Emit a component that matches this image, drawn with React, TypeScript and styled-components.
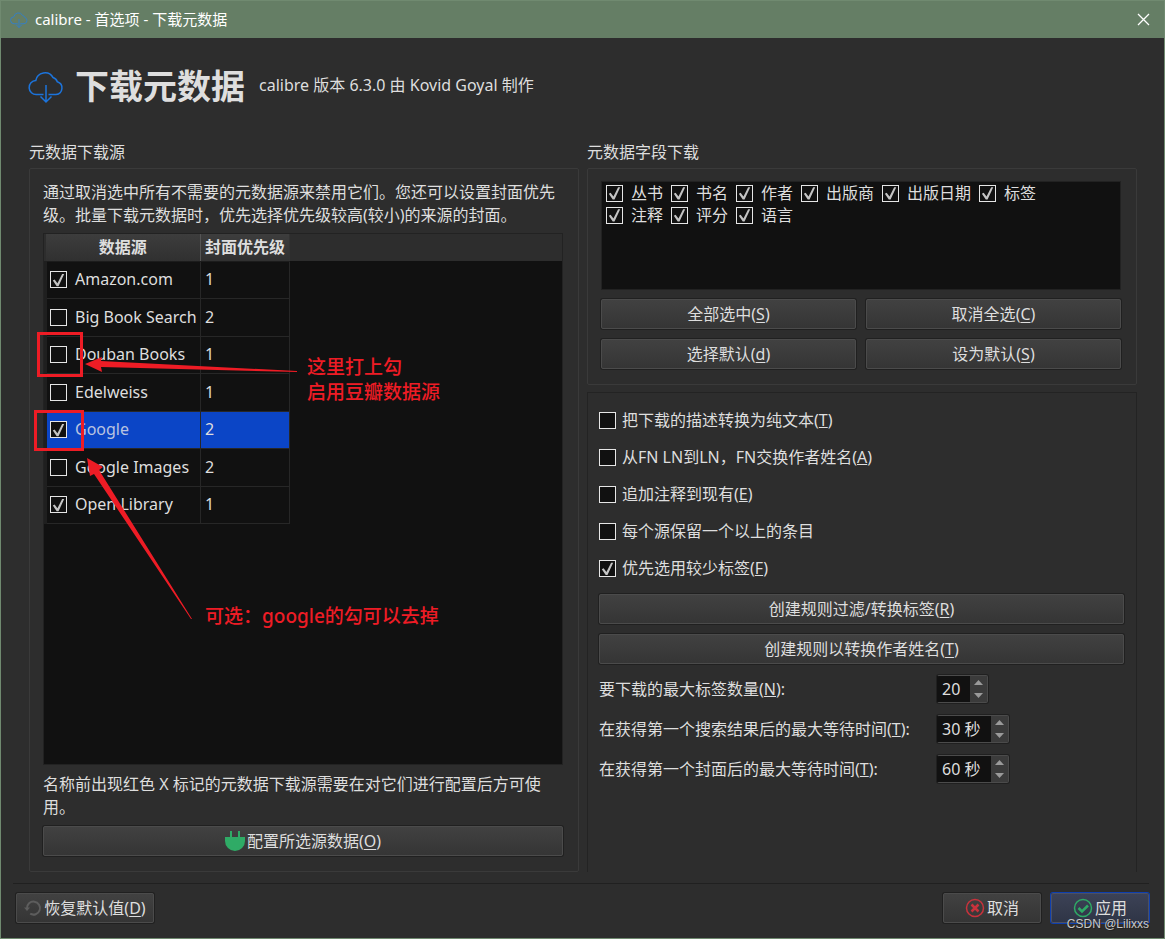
import React, { useId, useState } from 'react';
import styled, { createGlobalStyle } from 'styled-components';

const GlobalStyle = createGlobalStyle`
  *, *::before, *::after { box-sizing: border-box; }
  body { margin: 0; background: #2d2d2d; }
  body, button, input, table {
    font-family: 'Noto Sans', 'Noto Sans CJK SC', sans-serif;
    font-size: 16px;
    line-height: 23px;
    color: #dedede;
  }
  h1, h2, p { margin: 0; }
`;

const Window = styled.div`
  position: relative;
  display: flex;
  flex-direction: column;
  min-height: 100vh;
  background: #2d2d2d;
  border: 1px solid #708a70;
  border-top: 0;
`;

const TitleBar = styled.header`
  display: flex;
  align-items: center;
  gap: 7px;
  height: 38px;
  padding: 0 14px 0 9px;
  background: #657e65;
  border-top: 1px solid #708a70;
  color: #fff;
  font-size: 15px;
`;

const TitleText = styled.span`
  flex: 1;
`;

const CloseButton = styled.button`
  display: flex;
  padding: 0;
  border: 0;
  background: none;
`;

const PageHeader = styled.div`
  display: flex;
  align-items: flex-start;
  height: 98px;
  padding: 23px 27px 0;
`;

const CloudSlot = styled.div`
  display: flex;
  padding-top: 8px;
  margin-right: 11px;
`;

const PageTitle = styled.h1`
  font-size: 34px;
  line-height: 50px;
  font-weight: 700;
  margin-right: 14px;
`;

const Version = styled.span`
  line-height: 48px;
`;

const Columns = styled.main`
  flex: 1;
  display: grid;
  grid-template-columns: 1fr 1fr;
  column-gap: 8px;
  padding: 0 27px 0 28px;
`;

const Column = styled.section`
  display: flex;
  flex-direction: column;
  min-width: 0;
`;

const GroupTitle = styled.h2`
  font-size: 16px;
  line-height: 32px;
  font-weight: 400;
`;

const Panel = styled.div<{ $grow?: boolean }>`
  display: flex;
  flex-direction: column;
  flex: ${(p) => (p.$grow ? 1 : 'none')};
  padding: 12px 15px 15px 13px;
  border: 1px solid #3a3a3a;
  border-radius: 2px;
`;

const OptionsPanel = styled.div`
  display: flex;
  flex-direction: column;
  flex: 1;
  margin-top: 7px;
  padding: 9px 12px 16px 11px;
  border: 1px solid #232323;
  border-bottom: 0;
`;

const Frame = styled.div`
  flex: 1;
  margin: 6px 0 8px;
  background: linear-gradient(#2d2d2d 27px, #111 27px);
  border: 1px solid #222;
`;

const SourceTable = styled.table`
  height: 290px;
  width: 246px;
  border-collapse: collapse;
`;

const HeadCell = styled.th`
  height: 27px;
  padding: 0;
  background: linear-gradient(#3d3d3d, #303030);
  border-right: 1px solid #555;
  border-bottom: 1px solid #1c1c1c;
  font-weight: 700;
  line-height: 22px;
  white-space: nowrap;
  &:last-child { border-right-color: #333; }
`;

const Cell = styled.td<{ $selected?: boolean }>`
  padding: 0 0 0 4px;
  border: 1px solid #272727;
  background: ${(p) => (p.$selected ? '#0b45c6' : '#111')};
  &:first-child {
    width: 155px;
    padding-left: 3px;
    border-left: 3px solid #1f1f1f;
    color: ${(p) => (p.$selected ? '#b9c3e0' : 'inherit')};
  }
`;

const CheckLabel = styled.label<{ $tall?: boolean }>`
  display: flex;
  align-items: center;
  gap: ${(p) => (p.$tall ? '6px' : '8px')};
  height: ${(p) => (p.$tall ? '37px' : 'auto')};
  white-space: nowrap;
`;

const CheckBox = styled.input`
  appearance: none;
  flex: none;
  width: 17px;
  height: 17px;
  margin: 0;
  border: 1px solid #e6e6e6;
  background: #111;
  &:checked::before {
    content: '';
    display: block;
    width: 15px;
    height: 15px;
    background: #c4c4c4;
    clip-path: polygon(12% 55%, 24% 49%, 43% 74%, 74% 12%, 88% 12%, 50% 94%, 38% 94%);
  }
`;

const FieldList = styled.div`
  display: flex;
  flex-wrap: wrap;
  align-content: flex-start;
  column-gap: 8px;
  height: 109px;
  padding: 0 24px 0 4px;
  background: #111;
  border: 1px solid #222;
  line-height: 22px;
`;

const ButtonGrid = styled.div`
  display: grid;
  grid-template-columns: 1fr 1fr;
  gap: 10px;
  margin-top: 9px;
`;

const ButtonStack = styled.div`
  display: grid;
  gap: 10px;
  margin-top: 7px;
`;

const PushButton = styled.button<{ $primary?: boolean; $width?: string }>`
  display: flex;
  align-items: center;
  justify-content: center;
  gap: 2px;
  height: 30px;
  width: ${(p) => p.$width ?? 'auto'};
  padding: 0 6px;
  border: 1px solid ${(p) => (p.$primary ? '#4a5064' : '#4b4b4b')};
  border-radius: 2px;
  background: ${(p) => (p.$primary ? 'linear-gradient(#3c4256, #2f3546)' : 'linear-gradient(#414141, #353535)')};
  box-shadow: 0 0 0 1px ${(p) => (p.$primary ? '#0f3fae' : '#202020')};
  u { text-underline-offset: 2px; }
`;

const SpinGrid = styled.div`
  display: grid;
  grid-template-columns: 338px auto;
  justify-content: start;
  align-items: center;
  grid-auto-rows: 40px;
  margin-top: 5px;
`;

const SpinBox = styled.div`
  display: flex;
  width: fit-content;
  height: 28px;
  border: 1px solid #4b4b4b;
  border-left-color: #111;
  border-radius: 2px;
  background: #111;
  box-shadow: 0 0 0 1px #202020;
`;

const SpinInput = styled.input<{ $wide?: boolean }>`
  width: ${(p) => (p.$wide ? '53px' : '32px')};
  padding: 0 0 0 4px;
  border: 0;
  background: none;
`;

const SpinArrows = styled.div`
  display: grid;
  width: 17px;
  background: #3b3b3b;
`;

const ArrowButton = styled.button`
  display: flex;
  align-items: center;
  justify-content: center;
  padding: 0;
  border: 0;
  background: none;
`;

const Footer = styled.footer`
  display: flex;
  gap: 10px;
  margin: 11px 15px 0 12px;
  padding: 9px 0 15px 3px;
  border-top: 1px solid #202020;
`;

const Spacer = styled.div`
  flex: 1;
`;

const Watermark = styled.span`
  position: absolute;
  right: 15px;
  bottom: 2px;
  font-family: 'Liberation Sans', sans-serif;
  font-size: 12px;
  color: #c8c8c8;
  text-shadow: 1px 1px 0 #222;
`;

const Marker = styled.div<{ $x: number; $y: number; $w: number; $h: number }>`
  position: absolute;
  left: ${(p) => p.$x}px;
  top: ${(p) => p.$y}px;
  width: ${(p) => p.$w}px;
  height: ${(p) => p.$h}px;
  border: 3px solid #ee1c25;
`;

const Arrows = styled.svg`
  position: absolute;
  left: 0;
  top: 0;
  pointer-events: none;
`;

const Note = styled.p<{ $x: number; $y: number }>`
  position: absolute;
  left: ${(p) => p.$x}px;
  top: ${(p) => p.$y}px;
  color: #ee1c25;
  font-size: 19px;
  line-height: 25px;
  font-weight: 500;
`;

const CloudIcon = ({ size, color = '#1c74dc', stroke = 1.5 }: { size: number; color?: string; stroke?: number }) => (
  <svg width={size} height={size} viewBox="0 0 36 36" fill="none" stroke={color} strokeWidth={stroke}>
    <path d="M15.500 25.500H8.500a7 7 0 0 1-.700-14A9.300 9.300 0 0 1 25 8.500a6.500 6.500 0 0 1 4.300 4.300A6.500 6.500 0 0 1 28 25.500h-7.500" />
    <path d="M18 16v17M12.500 27.500L18 33l5.500-5.500" />
  </svg>
);

const PlugIcon = () => (
  <svg width="20" height="22" viewBox="0 0 20 22" fill="#2fab66">
    <path d="M5 1h2v6h6V1h2v6h5v4a10 10 0 0 1-20 0V7h5z" />
  </svg>
);

const RestoreIcon = () => (
  <svg width="18" height="18" viewBox="0 0 18 18" fill="none" stroke="#5d5d5d" strokeWidth="2">
    <path d="M3 9.500a6.500 6.500 0 1 1 3.200 5.200" />
    <path d="M0 8.500h6L3 12z" fill="#5d5d5d" stroke="none" />
  </svg>
);

const CancelIcon = () => (
  <svg width="20" height="20" viewBox="0 0 20 20" fill="none" stroke="#c8323c">
    <circle cx="10" cy="10" r="8.500" strokeWidth="1.500" />
    <path d="M6.500 6.500l7 7M13.500 6.500l-7 7" strokeWidth="2.500" />
  </svg>
);

const ApplyIcon = () => (
  <svg width="20" height="20" viewBox="0 0 20 20" fill="none" stroke="#2fab66">
    <circle cx="10" cy="10" r="8.500" strokeWidth="1.500" />
    <path d="M5.500 10l3.500 3.500 6-6" strokeWidth="2.500" />
  </svg>
);

const Mnemonic = ({ text, k, end = '' }: { text: string; k: string; end?: string }) => (
  <span>{text}(<u>{k}</u>){end}</span>
);

const Check = ({ on, tall, children }: { on: boolean; tall?: boolean; children: React.ReactNode }) => {
  const [checked, setChecked] = useState(on);
  return (
    <CheckLabel $tall={tall}>
      <CheckBox type="checkbox" checked={checked} onChange={() => setChecked(!checked)} />
      <span>{children}</span>
    </CheckLabel>
  );
};

const Spin = ({ label, value, wide }: { label: React.ReactNode; value: string; wide?: boolean }) => {
  const id = useId();
  return (
    <>
      <label htmlFor={id}>{label}</label>
      <SpinBox>
        <SpinInput id={id} $wide={wide} defaultValue={value} />
        <SpinArrows>
          <ArrowButton aria-label="+">
            <svg width="9" height="5"><path d="M0 5L4.500 0 9 5z" fill="#9a9a9a" /></svg>
          </ArrowButton>
          <ArrowButton aria-label="-">
            <svg width="9" height="5"><path d="M0 0h9L4.500 5z" fill="#9a9a9a" /></svg>
          </ArrowButton>
        </SpinArrows>
      </SpinBox>
    </>
  );
};

const sources = [
  { name: 'Amazon.com', on: true, priority: 1 },
  { name: 'Big Book Search', on: false, priority: 2 },
  { name: 'Douban Books', on: false, priority: 1 },
  { name: 'Edelweiss', on: false, priority: 1 },
  { name: 'Google', on: true, priority: 2, selected: true },
  { name: 'Google Images', on: false, priority: 2 },
  { name: 'Open Library', on: true, priority: 1 },
];

const fields = ['丛书', '书名', '作者', '出版商', '出版日期', '标签', '注释', '评分', '语言'];

export default function App() {
  return (
    <>
      <GlobalStyle />
      <Window>
        <TitleBar>
          <CloudIcon size={18} color="#357fc4" stroke={2} />
          <TitleText>calibre - 首选项 - 下载元数据</TitleText>
          <CloseButton aria-label="关闭">
            <svg width="13" height="13" stroke="#fff" strokeWidth="1.300"><path d="M1 1l11 11M12 1L1 12" /></svg>
          </CloseButton>
        </TitleBar>
        <PageHeader>
          <CloudSlot><CloudIcon size={36} /></CloudSlot>
          <PageTitle>下载元数据</PageTitle>
          <Version>calibre 版本 6.3.0 由 Kovid Goyal 制作</Version>
        </PageHeader>
        <Columns>
          <Column>
            <GroupTitle>元数据下载源</GroupTitle>
            <Panel $grow>
              <p>通过取消选中所有不需要的元数据源来禁用它们。您还可以设置封面优先级。批量下载元数据时，优先选择优先级较高(较小)的来源的封面。</p>
              <Frame>
                <SourceTable>
                  <thead>
                    <tr><HeadCell>数据源</HeadCell><HeadCell>封面优先级</HeadCell></tr>
                  </thead>
                  <tbody>
                    {sources.map((s) => (
                      <tr key={s.name}>
                        <Cell $selected={s.selected}><Check on={s.on}>{s.name}</Check></Cell>
                        <Cell $selected={s.selected}>{s.priority}</Cell>
                      </tr>
                    ))}
                  </tbody>
                </SourceTable>
              </Frame>
              <p>名称前出现红色 X 标记的元数据下载源需要在对它们进行配置后方可使用。</p>
              <ButtonStack>
                <PushButton><PlugIcon /><Mnemonic text="配置所选源数据" k="O" /></PushButton>
              </ButtonStack>
            </Panel>
          </Column>
          <Column>
            <GroupTitle>元数据字段下载</GroupTitle>
            <Panel>
              <FieldList>
                {fields.map((f) => <Check key={f} on>{f}</Check>)}
              </FieldList>
              <ButtonGrid>
                <PushButton><Mnemonic text="全部选中" k="S" /></PushButton>
                <PushButton><Mnemonic text="取消全选" k="C" /></PushButton>
                <PushButton><Mnemonic text="选择默认" k="d" /></PushButton>
                <PushButton><Mnemonic text="设为默认" k="S" /></PushButton>
              </ButtonGrid>
            </Panel>
            <OptionsPanel>
              <Check on={false} tall><Mnemonic text="把下载的描述转换为纯文本" k="T" /></Check>
              <Check on={false} tall><Mnemonic text="从FN LN到LN，FN交换作者姓名" k="A" /></Check>
              <Check on={false} tall><Mnemonic text="追加注释到现有" k="E" /></Check>
              <Check on={false} tall>每个源保留一个以上的条目</Check>
              <Check on tall><Mnemonic text="优先选用较少标签" k="F" /></Check>
              <ButtonStack>
                <PushButton><Mnemonic text="创建规则过滤/转换标签" k="R" /></PushButton>
                <PushButton><Mnemonic text="创建规则以转换作者姓名" k="T" /></PushButton>
              </ButtonStack>
              <SpinGrid>
                <Spin label={<Mnemonic text="要下载的最大标签数量" k="N" end=":" />} value="20" />
                <Spin label={<Mnemonic text="在获得第一个搜索结果后的最大等待时间" k="T" end=":" />} value="30 秒" wide />
                <Spin label={<Mnemonic text="在获得第一个封面后的最大等待时间" k="T" end=":" />} value="60 秒" wide />
              </SpinGrid>
            </OptionsPanel>
          </Column>
        </Columns>
        <Footer>
          <PushButton $width="138px"><RestoreIcon /><Mnemonic text="恢复默认值" k="D" /></PushButton>
          <Spacer />
          <PushButton $width="98px"><CancelIcon />取消</PushButton>
          <PushButton $primary $width="98px"><ApplyIcon />应用</PushButton>
        </Footer>
        <Marker $x={36} $y={332} $w={46} $h={45} />
        <Marker $x={33} $y={410} $w={50} $h={41} />
        <Arrows width="320" height="640" fill="#ee1c25">
          <path d="M84 364L101 357l-1 4L296 371v1L100 367l1 5z" />
          <path d="M86 458l16 9-4 3L191 619h-1L93 474l-4 2z" />
        </Arrows>
        <Note $x={306} $y={355}>这里打上勾<br />启用豆瓣数据源</Note>
        <Note $x={204} $y={604}>可选：google的勾可以去掉</Note>
        <Watermark>CSDN @Lilixxs</Watermark>
      </Window>
    </>
  );
}
